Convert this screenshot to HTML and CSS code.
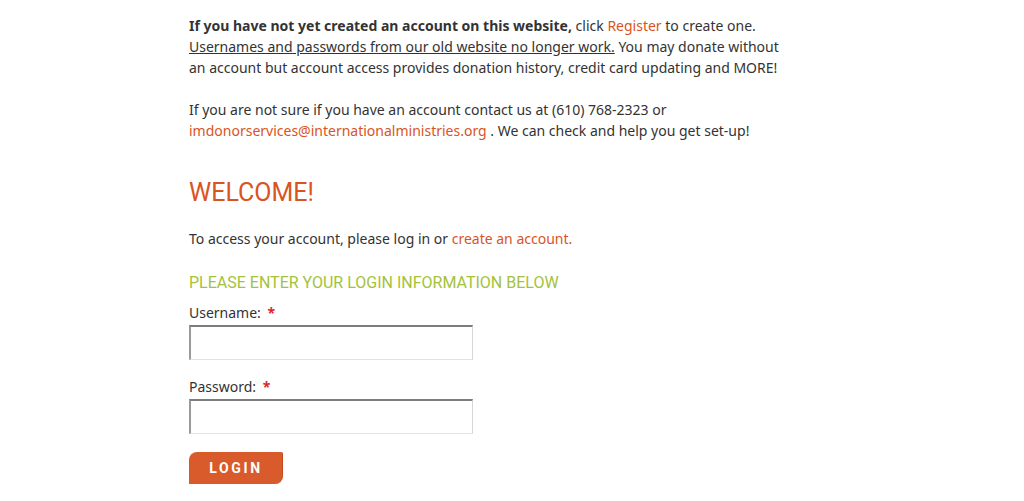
FILE: index.html
```html
<!DOCTYPE html>
<html lang="en">
<head>
<meta charset="utf-8">
<title>Login</title>
<link rel="stylesheet" href="styles.css">
</head>
<body>
<main class="content">
  <p class="intro">
    <strong>If you have not yet created an account on this website,</strong> click <a href="#">Register</a> to create one.<br>
    <u>Usernames and passwords from our old website no longer work.</u> You may donate without an account but account access provides donation history, credit card updating and MORE!<br><br>
    If you are not sure if you have an account contact us at (610) 768-2323 or <a href="#">imdonorservices@internationalministries.org</a> . We can check and help you get set-up!
  </p>
  <h1 class="welcome">WELCOME!</h1>
  <p class="access">To access your account, please log in or <a href="#">create an account.</a></p>
  <h2 class="subhead">PLEASE ENTER YOUR LOGIN INFORMATION BELOW</h2>
  <form class="login">
    <div class="field">
      <label>Username: <span class="req">*</span></label>
      <input type="text" class="input">
    </div>
    <div class="field">
      <label>Password: <span class="req">*</span></label>
      <input type="password" class="input">
    </div>
    <button type="button" class="btn">LOGIN</button>
  </form>
</main>
</body>
</html>
```
FILE: styles.css
```css
html, body {
  margin: 0;
  padding: 0;
  background: #fff;
}
body {
  font-family: "Noto Sans", "Open Sans", sans-serif;
  font-size: 14px;
  line-height: 21px;
  color: #333;
}
.content {
  width: 600px;
  margin-left: 189px;
  padding-top: 15px;
}
a {
  color: #d9541e;
  text-decoration: none;
}
.intro {
  margin: 0;
}
.intro strong {
  font-weight: 700;
}
.welcome {
  font-family: Roboto, "Liberation Sans", sans-serif;
  font-weight: 400;
  font-size: 25px;
  line-height: 30px;
  color: #d9541e;
  margin: 37px 0 0;
}
.access {
  margin: 20px 0 0;
}
.subhead {
  font-family: Roboto, "Liberation Sans", sans-serif;
  font-weight: 400;
  font-size: 16px;
  line-height: 20px;
  color: #a4c23a;
  margin: 24px 0 0;
}
.login {
  margin-top: 9px;
}
.field {
  display: flex;
  flex-direction: column;
  align-items: flex-start;
  margin-bottom: 16px;
}
.field label {
  line-height: 21px;
  margin-bottom: 2px;
}
.req {
  color: #e0262b;
  font-weight: 700;
  margin-left: 3px;
}
.input {
  box-sizing: border-box;
  width: 284px;
  height: 35px;
  margin: 0;
  border-style: solid;
  border-width: 2px 1px 1px 2px;
  border-color: #7c7c7c #d6d6d6 #e2e2e2 #9a9a9a;
  background: #fff;
}
.btn {
  display: block;
  margin-top: 18px;
  width: 94px;
  height: 32px;
  background: #d95b2b;
  color: #fff;
  border: none;
  border-right: 1px solid #c24c1f;
  border-radius: 8px 2px 8px 0;
  font-family: Roboto, "Liberation Sans", sans-serif;
  font-weight: 700;
  font-size: 14px;
  letter-spacing: 2.6px;
  padding: 0;
  padding-left: 1px;
}
```
